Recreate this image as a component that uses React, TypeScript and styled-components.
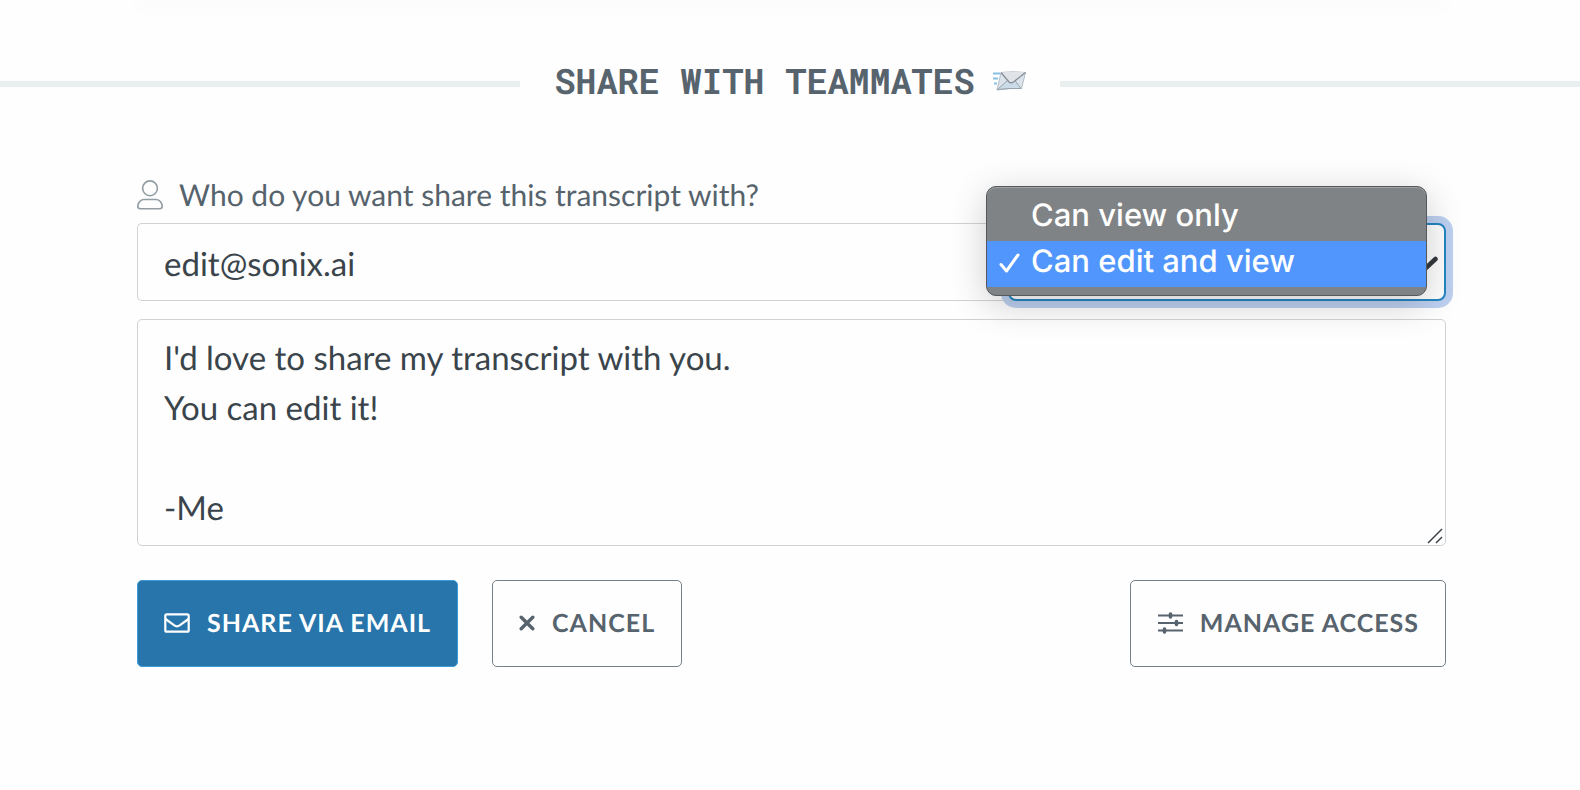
import React, { useState } from 'react';
import styled, { createGlobalStyle, css } from 'styled-components';

const GlobalStyle = createGlobalStyle`
  *, *::before, *::after { box-sizing: border-box; }
  body {
    margin: 0;
    background: #fefefe;
    color: #3a444b;
    font-family: Lato, "Open Sans", sans-serif;
    text-rendering: geometricPrecision;
    overflow-x: hidden;
  }
`;

const Page = styled.main`
  padding-bottom: 64px;
`;

const PreviousCard = styled.div`
  height: 0;
  margin: 0 134px 0 137px;
  box-shadow: 0 0 24px 2px rgba(0, 0, 0, 0.07);
`;

const Heading = styled.h2`
  display: flex;
  align-items: center;
  gap: 34px;
  margin: 0;
  padding-top: 59px;
  font-family: "Roboto Mono", "Liberation Mono", monospace;
  font-size: 35px;
  line-height: 44px;
  font-weight: 700;
  color: #57636d;
  white-space: nowrap;

  &::before,
  &::after {
    content: "";
    flex: 1;
    height: 6px;
    background: #e9efef;
  }
`;

const HeadingText = styled.span`
  display: flex;
  align-items: center;
  gap: 17px;
  padding-bottom: 6px;
`;

const Form = styled.form`
  display: flex;
  flex-direction: column;
  margin: 0;
  padding: 65px 134px 0 137px;
`;

const Label = styled.label`
  display: flex;
  align-items: center;
  gap: 16px;
  height: 42px;
  margin-bottom: 7px;
  font-size: 30px;
  line-height: 42px;
  color: #56636c;
`;

const Recipient = styled.div`
  display: flex;
  height: 78px;
  margin-bottom: 18px;
`;

const field = css`
  border: 1px solid #cfd3d6;
  border-radius: 5px;
  background: #fefefe;
  color: #3a444b;
  font-family: inherit;
  font-size: 33px;
  text-rendering: inherit;
  outline: none;
`;

const EmailInput = styled.input`
  ${field}
  flex: 1;
  min-width: 0;
  padding: 4px 26px 0;
  border-right: 0;
  border-radius: 5px 0 0 5px;
`;

const Permission = styled.div`
  position: relative;
  width: 438px;
`;

const PermissionSelect = styled.select`
  ${field}
  appearance: none;
  width: 100%;
  height: 100%;
  padding: 0 26px;
  border: 2px solid #2585c1;
  border-radius: 8px;
  box-shadow: 0 0 0 7px #bdd0f0;
`;

const Chevron = styled.svg`
  position: absolute;
  right: 8px;
  top: 33px;
`;

const Menu = styled.ul`
  position: absolute;
  z-index: 1;
  top: -37px;
  left: -22px;
  width: 441px;
  margin: 0;
  padding: 8px 0;
  list-style: none;
  border: 1px solid #54585b;
  border-radius: 10px;
  background: #7f8385;
  box-shadow: inset 0 1px 0 #a0a3a5, 0 8px 36px rgba(0, 0, 0, 0.2);
  font-family: Inter, "Liberation Sans", sans-serif;
  font-size: 31px;
  font-weight: 500;
  color: #fff;
`;

const MenuItem = styled.li<{ $selected?: boolean }>`
  display: flex;
  align-items: center;
  gap: 11px;
  height: 46px;
  padding: 0 0 6px 12px;
  background: ${({ $selected }) => ($selected ? '#5096fd' : 'transparent')};
  cursor: default;
`;

const CheckSlot = styled.span`
  display: flex;
  width: 21px;
  padding-top: 4px;
`;

const MessageBox = styled.div`
  position: relative;
  display: flex;
  margin-bottom: 34px;
`;

const Message = styled.textarea`
  ${field}
  width: 100%;
  height: 227px;
  padding: 13px 26px;
  line-height: 50px;
  resize: none;
  overflow: hidden;
`;

const Grip = styled.svg`
  position: absolute;
  right: 3px;
  bottom: 2px;
`;

const Actions = styled.div`
  display: flex;
  gap: 34px;
`;

const Button = styled.button<{ $primary?: boolean; $end?: boolean }>`
  display: flex;
  align-items: center;
  gap: 17px;
  height: 87px;
  padding: 0 26px 2px;
  border: 1px solid ${({ $primary }) => ($primary ? '#3d9bd9' : '#74808a')};
  border-radius: 5px;
  background: ${({ $primary }) => ($primary ? '#2775aa' : '#fefefe')};
  color: ${({ $primary }) => ($primary ? '#fff' : '#57636d')};
  font-family: inherit;
  font-size: 25px;
  font-weight: 700;
  letter-spacing: 1px;
  text-rendering: inherit;
  white-space: nowrap;
  margin-left: ${({ $end }) => ($end ? 'auto' : '0')};
`;

const IncomingMailIcon = () => (
  <svg width="34" height="22" viewBox="0 0 34 22" aria-hidden="true">
    <g stroke="#86bfe2" strokeWidth="2" fill="none">
      <path d="M1 3.500h7M1 8.500h5M2 13.500h3" />
    </g>
    <path d="M9 2.500Q21 1 33.500 2.500L29.500 18.500Q17 18 5 20Z" fill="#dce3eb" stroke="#b4bdc6" strokeWidth="1" />
    <path d="M5.500 19.500L15.500 10.500L22.500 10L29 18.500Q17 18 5.500 19.500Z" fill="#cbdbe8" stroke="#98a3ad" strokeWidth="1" />
    <path d="M9 2.500Q21 1 33.500 2.500L21.500 12Q19 13.500 17 12Z" fill="#e0e4e9" />
    <path d="M9 2.500L17 12Q19 13.500 21.500 12L33.500 2.500" fill="none" stroke="#858d95" strokeWidth="1.300" />
  </svg>
);

const PersonIcon = () => (
  <svg width="26" height="30" viewBox="0 0 26 30" fill="none" stroke="#919ca3" strokeWidth="1.600" aria-hidden="true">
    <circle cx="13" cy="8.300" r="7.400" />
    <path d="M6.500 19.500H19.500C22.500 19.500 25.200 23.500 25.200 26.300Q25.200 28.700 22.500 28.700H3.500Q.8 28.700 .8 26.300C.8 23.500 3.500 19.500 6.500 19.500Z" />
  </svg>
);

const EnvelopeIcon = () => (
  <svg width="26" height="20" viewBox="0 0 26 20" fill="none" stroke="currentColor" strokeWidth="2.200" strokeLinejoin="round" aria-hidden="true">
    <rect x="1.300" y="1.300" width="23.400" height="17.400" rx="1.500" />
    <path d="M1.500 6L10 12.200Q13 14.400 16 12.200L24.500 6" />
  </svg>
);

const CloseIcon = () => (
  <svg width="16" height="16" viewBox="0 0 16 16" stroke="currentColor" strokeWidth="3.400" strokeLinecap="round" aria-hidden="true">
    <path d="M2.200 2.200L13.800 13.800M13.800 2.200L2.200 13.800" />
  </svg>
);

const SlidersIcon = () => (
  <svg width="26" height="24" viewBox="0 0 26 24" stroke="currentColor" fill="none" aria-hidden="true">
    <path strokeWidth="2.200" d="M1 4.500H26M1 12H26M1 19.500H26" />
    <path strokeWidth="3.600" strokeLinecap="round" d="M13.500 3V6M19.500 10.500V13.500M7.500 18V21" />
  </svg>
);

const options = ['Can view only', 'Can edit and view'];

export default function App() {
  const [permission, setPermission] = useState(options[1]);

  return (
    <Page>
      <GlobalStyle />
      <PreviousCard />
      <Heading>
        <HeadingText>
          SHARE WITH TEAMMATES
          <IncomingMailIcon />
        </HeadingText>
      </Heading>
      <Form onSubmit={(e) => e.preventDefault()}>
        <Label htmlFor="recipient">
          <PersonIcon />
          Who do you want share this transcript with?
        </Label>
        <Recipient>
          <EmailInput id="recipient" type="email" defaultValue="edit@sonix.ai" />
          <Permission>
            <PermissionSelect
              aria-label="Permission"
              value={permission}
              onChange={(e) => setPermission(e.target.value)}
            >
              {options.map((option) => (
                <option key={option}>{option}</option>
              ))}
            </PermissionSelect>
            <Chevron width="22" height="14" viewBox="0 0 22 14" fill="none" stroke="#34393d" strokeWidth="4.500" strokeLinecap="round" aria-hidden="true">
              <path d="M2 3L11 11L19.500 3" />
            </Chevron>
            <Menu role="listbox" aria-label="Permission">
              {options.map((option) => (
                <MenuItem
                  key={option}
                  role="option"
                  aria-selected={option === permission}
                  $selected={option === permission}
                  onClick={() => setPermission(option)}
                >
                  <CheckSlot>
                    {option === permission && (
                      <svg width="21" height="20" viewBox="0 0 21 20" fill="none" stroke="#fff" strokeWidth="3" strokeLinecap="round" strokeLinejoin="round" aria-hidden="true">
                        <path d="M2 11.500L7.500 18L19 2" />
                      </svg>
                    )}
                  </CheckSlot>
                  {option}
                </MenuItem>
              ))}
            </Menu>
          </Permission>
        </Recipient>
        <MessageBox>
          <Message
            aria-label="Message"
            defaultValue={"I'd love to share my transcript with you.\nYou can edit it!\n\n-Me"}
          />
          <Grip width="16" height="16" viewBox="0 0 16 16" stroke="#3c4246" strokeWidth="1.500" aria-hidden="true">
            <path d="M1 15L15 1M9 15L15 9" />
          </Grip>
        </MessageBox>
        <Actions>
          <Button type="submit" $primary>
            <EnvelopeIcon />
            SHARE VIA EMAIL
          </Button>
          <Button type="button">
            <CloseIcon />
            CANCEL
          </Button>
          <Button type="button" $end>
            <SlidersIcon />
            MANAGE ACCESS
          </Button>
        </Actions>
      </Form>
    </Page>
  );
}
